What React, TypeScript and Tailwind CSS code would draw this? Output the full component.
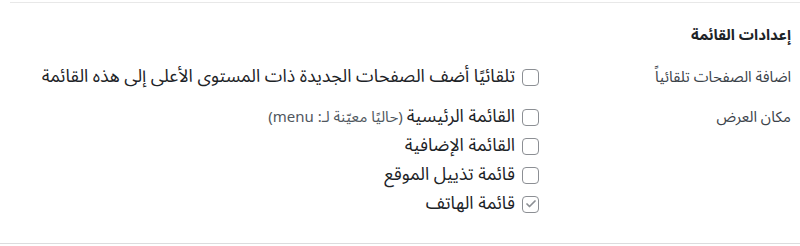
import { Check } from "lucide-react";

const font = { fontFamily: '"Noto Sans Arabic", "Noto Sans", "DejaVu Sans", sans-serif' };

function Box({ checked = false }: { checked?: boolean }) {
  return (
    <span className="flex h-[17px] w-[17px] shrink-0 items-center justify-center rounded-[4px] border border-[#8c8f94] bg-white">
      {checked && <Check className="h-3 w-3 text-[#8c8f94]" strokeWidth={3.5} />}
    </span>
  );
}

function Option({ label, note, checked }: { label: string; note?: string; checked?: boolean }) {
  return (
    <label className="flex h-[29px] items-center gap-[7px] text-[17.8px] leading-[22px] text-[#1d2327]">
      <Box checked={checked} />
      <span>
        {label}
        {note && <span className="text-[15px] text-[#50575e]"> {note}</span>}
      </span>
    </label>
  );
}

export default function App() {
  return (
    <div dir="rtl" className="h-[246px] w-[800px] overflow-hidden bg-white" style={font}>
      <div className="mt-[2px] ml-[10px] border-t border-[#e8e8e8]" />
      <div className="pr-[9px] pt-[21px]">
        <h3 className="text-[15px] font-bold text-[#1d2327]">إعدادات القائمة</h3>
        <div className="mt-[16px] flex">
          <div className="w-[252px] shrink-0 pt-[3px] text-[15px] text-[#3c434a]">اضافة الصفحات تلقائياً</div>
          <div>
            <Option label="تلقائيًا أضف الصفحات الجديدة ذات المستوى الأعلى إلى هذه القائمة" />
          </div>
        </div>
        <div className="mt-[11px] flex">
          <div className="w-[252px] shrink-0 pt-[3px] text-[15px] text-[#3c434a]">مكان العرض</div>
          <div>
            <Option label="القائمة الرئيسية" note="(حاليًا معيّنة لـ: menu)" />
            <Option label="القائمة الإضافية" />
            <Option label="قائمة تذييل الموقع" />
            <Option label="قائمة الهاتف" checked />
          </div>
        </div>
      </div>
      <div className="mt-[24px] border-t border-[#dcdcde]" />
    </div>
  );
}
